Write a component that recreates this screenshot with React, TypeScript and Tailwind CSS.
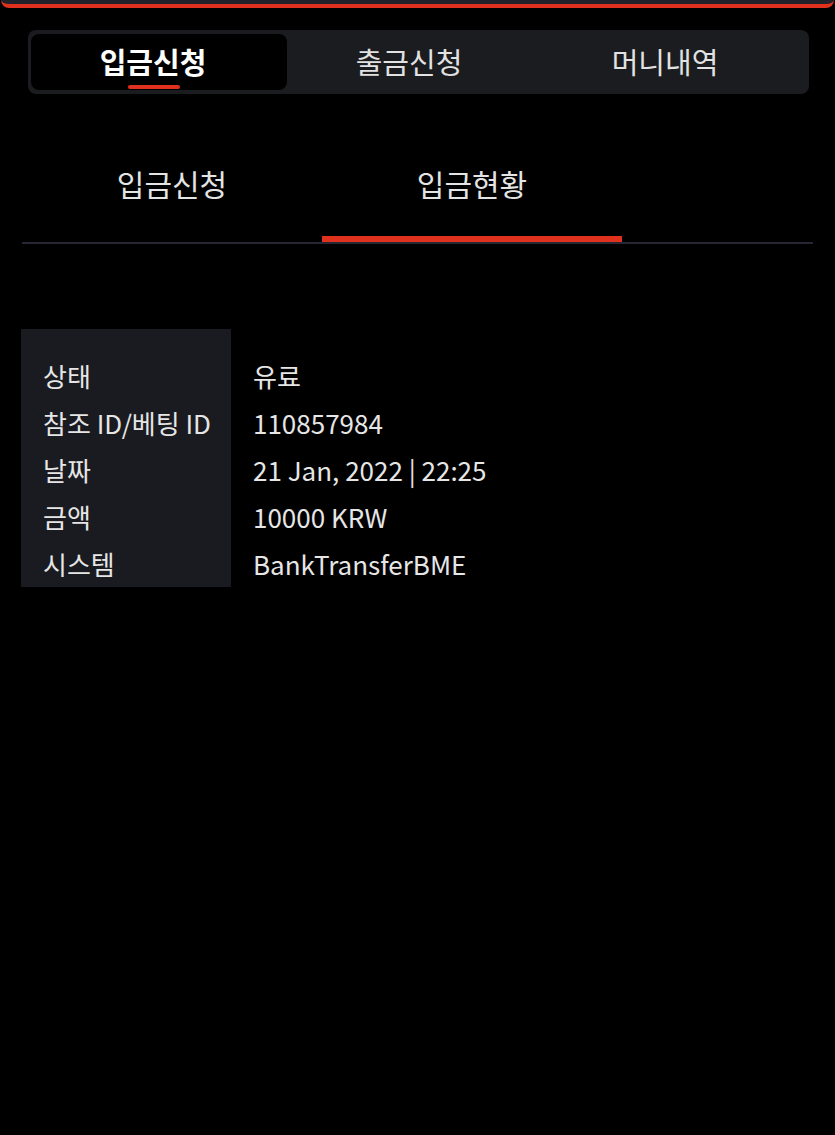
const FONT = "font-['Noto_Sans_CJK_KR','Noto_Sans',sans-serif]"

const TOP_TABS = ["입금신청", "출금신청", "머니내역"]
const SUB_TABS = ["입금신청", "입금현황"]

const ROWS = [
  ["상태", "유료"],
  ["참조 ID/베팅 ID", "110857984"],
  ["날짜", "21 Jan, 2022 | 22:25"],
  ["금액", "10000 KRW"],
  ["시스템", "BankTransferBME"],
]

export default function App() {
  return (
    <div className={`${FONT} min-h-[1135px] w-full bg-black text-[#e6e6e6]`}>
      {/* header edge */}
      <div className="mx-[1px] h-[8px] rounded-b-[10px] border-b-[4px] border-[#e0301e] bg-[#22232a]" />

      {/* segmented tabs */}
      <div className="mx-[28px] mt-[22px] flex h-[64px] w-[781px] items-center rounded-[8px] bg-[#1b1c20] px-[3px]">
        {TOP_TABS.map((t, i) => (
          <div
            key={t}
            className={
              i === 0
                ? "relative flex h-[56px] w-[256px] items-center justify-center rounded-[8px] bg-black pr-[12px] text-[29px] font-bold text-white"
                : "flex h-[56px] w-[256px] items-center justify-center pr-[12px] text-[29px] text-[#e2e2e2]"
            }
          >
            {t}
            {i === 0 && (
              <span className="absolute bottom-[1px] left-[97px] h-[4px] w-[52px] rounded-full bg-[#e0301e]" />
            )}
          </div>
        ))}
      </div>

      {/* sub tabs */}
      <div className="mx-[22px] mt-[48px] flex border-b-[2px] border-[#262733]">
        {SUB_TABS.map((t, i) => (
          <div key={t} className="flex w-[300px] flex-col items-center">
            <div className="flex h-[94px] items-center pb-[12px] text-[30px] text-[#e4e4e4]">{t}</div>
            <div className={i === 1 ? "h-[6px] w-full bg-[#e0301e]" : "h-[6px] w-full"} />
          </div>
        ))}
      </div>

      {/* detail table */}
      <div className="mx-[21px] mt-[85px] flex">
        <div className="w-[210px] bg-[#1a1b20] pt-[23px] pl-[22px]">
          {ROWS.map(([k]) => (
            <div key={k} className="flex h-[47px] items-center text-[26px] leading-none">
              {k}
            </div>
          ))}
        </div>
        <div className="pt-[23px] pl-[22px]">
          {ROWS.map(([k, v]) => (
            <div key={k} className="flex h-[47px] items-center text-[26px] leading-none">
              {v}
            </div>
          ))}
        </div>
      </div>
    </div>
  )
}
